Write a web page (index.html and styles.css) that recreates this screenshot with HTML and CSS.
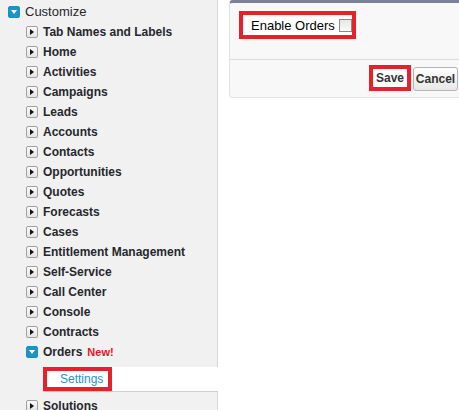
FILE: index.html
```html
<!DOCTYPE html>
<html>
<head>
<meta charset="utf-8">
<link rel="stylesheet" href="styles.css">
</head>
<body>
<div class="page">
  <nav class="sidebar">
    <div class="row top"><span class="ico open"></span><span class="lbl-top">Customize</span></div>
    <div class="row child"><span class="ico"></span><span class="lbl">Tab Names and Labels</span></div>
    <div class="row child"><span class="ico"></span><span class="lbl">Home</span></div>
    <div class="row child"><span class="ico"></span><span class="lbl">Activities</span></div>
    <div class="row child"><span class="ico"></span><span class="lbl">Campaigns</span></div>
    <div class="row child"><span class="ico"></span><span class="lbl">Leads</span></div>
    <div class="row child"><span class="ico"></span><span class="lbl">Accounts</span></div>
    <div class="row child"><span class="ico"></span><span class="lbl">Contacts</span></div>
    <div class="row child"><span class="ico"></span><span class="lbl">Opportunities</span></div>
    <div class="row child"><span class="ico"></span><span class="lbl">Quotes</span></div>
    <div class="row child"><span class="ico"></span><span class="lbl">Forecasts</span></div>
    <div class="row child"><span class="ico"></span><span class="lbl">Cases</span></div>
    <div class="row child"><span class="ico"></span><span class="lbl">Entitlement Management</span></div>
    <div class="row child"><span class="ico"></span><span class="lbl">Self-Service</span></div>
    <div class="row child"><span class="ico"></span><span class="lbl">Call Center</span></div>
    <div class="row child"><span class="ico"></span><span class="lbl">Console</span></div>
    <div class="row child"><span class="ico"></span><span class="lbl">Contracts</span></div>
    <div class="row child"><span class="ico open"></span><span class="lbl">Orders</span><span class="new">New!</span></div>
    <div class="settings-row"><span class="hl settings">Settings</span></div>
    <div class="row child after"><span class="ico"></span><span class="lbl">Solutions</span></div>
  </nav>
  <main class="main">
    <section class="panel">
      <div class="panel-body">
        <label class="hl enable">Enable Orders <span class="checkbox"></span></label>
      </div>
      <div class="panel-buttons">
        <span class="hl save">Save</span>
        <span class="btn">Cancel</span>
      </div>
    </section>
  </main>
</div>
</body>
</html>
```
FILE: styles.css
```css
html, body {
  margin: 0;
  padding: 0;
  background: #fff;
  font-family: Arial, "Liberation Sans", sans-serif;
  overflow: hidden;
}
.page {
  display: flex;
  width: 459px;
  height: 410px;
  overflow: hidden;
}
.sidebar {
  width: 217px;
  flex: none;
  background: #f1f1f1;
  border-right: 1px solid #d6d6d6;
  padding-top: 1px;
  height: 420px;
}
.row {
  height: 20px;
  display: flex;
  align-items: center;
  color: #26272d;
}
.row.top {
  padding-left: 8px;
  height: 21px;
}
.row.child {
  padding-left: 26px;
}
.row.after {
  margin-top: 4px;
}
.lbl-top {
  font-size: 13px;
  margin-left: 5px;
}
.lbl {
  font-size: 12px;
  font-weight: bold;
  margin-left: 5px;
}
.new {
  color: #e8141c;
  font-size: 11px;
  font-weight: bold;
  margin-left: 5px;
}
.ico {
  position: relative;
  width: 10px;
  height: 10px;
  border: 1px solid #a0a0a0;
  border-radius: 2px;
  background: linear-gradient(#fafafa, #e4e4e4);
  flex: none;
}
.ico::after {
  content: "";
  position: absolute;
  left: 3px;
  top: 2px;
  border-left: 4px solid #111;
  border-top: 3px solid transparent;
  border-bottom: 3px solid transparent;
}
.ico.open {
  border-color: #1a8fc0;
  background: #1a95c6;
}
.ico.open::after {
  left: 2px;
  top: 3px;
  border-top: 4px solid #fff;
  border-left: 3px solid transparent;
  border-right: 3px solid transparent;
  border-bottom: 0;
}
.settings-row {
  margin-top: 5px;
  margin-left: 43px;
  margin-right: -1px;
  height: 24px;
  background: #fff;
  border-bottom: 1px solid #cfcfcf;
  display: flex;
}
.hl {
  border: 4px solid #e8202a;
  background: #fff;
  box-sizing: border-box;
}
.settings {
  width: 69px;
  height: 24px;
  padding-left: 13px;
  font-size: 12px;
  color: #2a94c8;
  line-height: 16px;
}
.main {
  flex: 1;
  padding-left: 11px;
}
.panel {
  width: 240px;
  background: #f8f8f8;
  border: 1px solid #e2e2e2;
  border-top: 3px solid #7b8197;
  border-right: 0;
  border-radius: 4px 0 0 4px;
  height: 94px;
  box-sizing: content-box;
}
.panel-body {
  height: 56px;
  padding-left: 9px;
  padding-top: 8px;
  box-sizing: border-box;
}
.enable {
  display: inline-flex;
  align-items: center;
  width: 117px;
  height: 28px;
  padding-left: 8px;
  font-size: 13px;
  color: #000;
}
.checkbox {
  display: inline-block;
  width: 11px;
  height: 11px;
  border: 1px solid #8a8a8a;
  background: linear-gradient(#e6e6e6, #fafafa);
  margin-left: 4px;
}
.panel-buttons {
  border-top: 1px solid #dbdbdb;
  height: 37px;
  display: flex;
  align-items: flex-start;
  padding-left: 139px;
  padding-top: 5px;
  box-sizing: border-box;
  gap: 2px;
}
.save {
  width: 42px;
  height: 26px;
  font-size: 12px;
  font-weight: bold;
  color: #333;
  display: flex;
  align-items: center;
  justify-content: center;
}
.btn {
  margin-top: 2px;
  width: 45px;
  height: 24px;
  box-sizing: border-box;
  border: 1px solid #b5b5b5;
  border-radius: 3px;
  background: linear-gradient(#fdfdfd, #e8e8e8);
  font-size: 12px;
  font-weight: bold;
  color: #333;
  display: flex;
  align-items: center;
  justify-content: center;
}
```
